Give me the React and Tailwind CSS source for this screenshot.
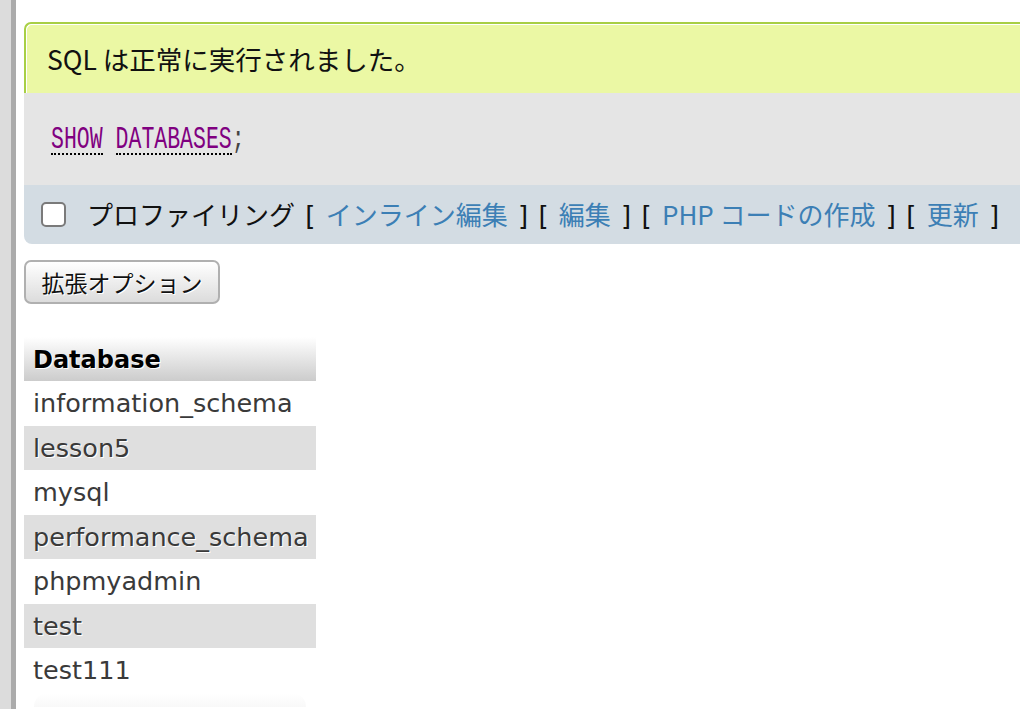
import React from "react";

const rows = [
  "information_schema",
  "lesson5",
  "mysql",
  "performance_schema",
  "phpmyadmin",
  "test",
  "test111",
];

function Link({ children }) {
  return <span className="text-[#3c7fb5]">{children}</span>;
}

function B({ children }) {
  return (
    <span className="font-['DejaVu_Sans',sans-serif] text-[26px] whitespace-pre [word-spacing:2px]">
      {children}
    </span>
  );
}

export default function App() {
  const jp = "font-['Noto_Sans_CJK_JP','Noto_Sans',sans-serif]";
  return (
    <div className="w-[1020px] h-[709px] overflow-hidden bg-white flex">
      <div className="w-[11px] h-full bg-[#dcdcdc]" />
      <div className="w-[5px] h-full bg-[#ababab]" />
      <div className="flex-1 min-w-0 pl-[8px] relative">
        {/* success message */}
        <div
          className={`mt-[22px] w-[1100px] h-[71px] border-t-2 border-l-2 border-[#a8cf45] rounded-tl-[7px] bg-[#ebf8a4] shadow-[inset_1px_1px_0_#ffffff] flex items-center pl-[21px] text-[26.5px] text-[#111] ${jp}`}
        >
          SQL は正常に実行されました。
        </div>
        {/* sql + bar */}
        <div className="w-[1100px]">
          <div className="h-[92px] bg-[#e5e5e5] flex items-center pl-[27px] pt-[6px] font-['Liberation_Mono',monospace] text-[21.5px]">
            <span className="inline-block border-b-2 border-dotted border-black leading-[21px] pb-[3px] text-[#800080]">
              <span className="inline-block scale-y-[1.5]">SHOW</span>
            </span>
            <span className="inline-block w-[13px]" />
            <span className="inline-block border-b-2 border-dotted border-black leading-[21px] pb-[3px] text-[#800080]">
              <span className="inline-block scale-y-[1.5]">DATABASES</span>
            </span>
            <span className="inline-block leading-[21px] pb-[5px] text-[#444]">
              <span className="inline-block scale-y-[1.5]">;</span>
            </span>
          </div>
          <div
            className={`h-[59px] bg-[#d3dce3] rounded-bl-[8px] flex items-center pl-[17px] text-[26px] text-[#111] ${jp}`}
          >
            <span className="w-[25px] h-[25px] rounded-[5px] border-2 border-[#7a7a7a] bg-white shrink-0" />
            <span className="ml-[21px] whitespace-pre">
              プロファイリング<B> [ </B>
              <Link>インライン編集</Link>
              <B> ] [ </B>
              <Link>編集</Link>
              <B> ] [ </B>
              <Link>PHP コードの作成</Link>
              <B> ] [ </B>
              <Link>更新</Link>
              <B> ]</B>
            </span>
          </div>
        </div>
        {/* button */}
        <button
          className={`mt-[16px] w-[196px] h-[44px] rounded-[7px] border-2 border-[#b0b0b0] bg-gradient-to-b from-white to-[#dcdcdc] text-[23px] text-[#111] [text-shadow:1px_1px_0_#fff] flex items-center justify-center ${jp}`}
        >
          拡張オプション
        </button>
        {/* table */}
        <div className="mt-[33px] w-[292px] font-['DejaVu_Sans',sans-serif]">
          <div className="h-[44px] bg-gradient-to-b from-white to-[#cccccc] flex items-center pl-[9px] pt-[2px] text-[24px] font-bold text-black [text-shadow:1px_1px_0_#fff]">
            Database
          </div>
          {rows.map((r, i) => (
            <div
              key={r}
              className={`h-[44.5px] flex items-center pl-[9px] text-[25.5px] text-[#3a3a3a] [text-shadow:1px_1px_0_#fff] ${
                i % 2 === 1 ? "bg-[#dfdfdf]" : "bg-white"
              }`}
            >
              {r}
            </div>
          ))}
          <div className="h-[14px] mx-[10px] bg-gradient-to-b from-white to-[#f8f8f8] rounded-t-[60px]" />
        </div>
      </div>
    </div>
  );
}
